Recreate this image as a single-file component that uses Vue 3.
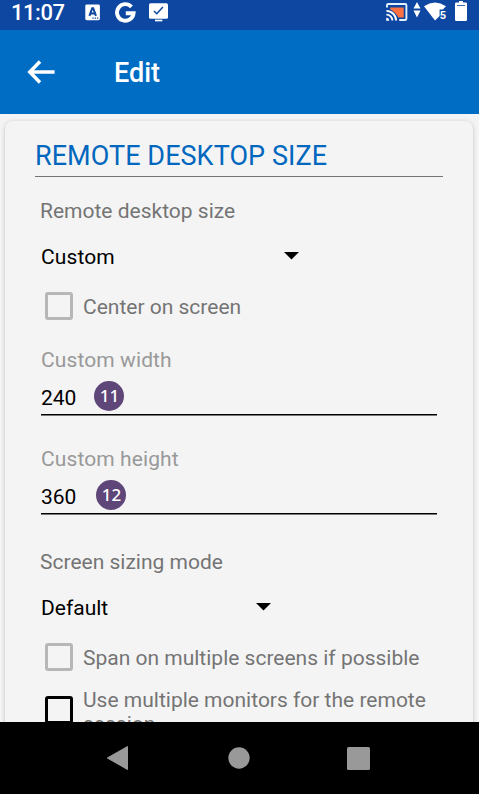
<script setup>
import { ref } from 'vue'

const title = ref('REMOTE DESKTOP SIZE')
const fields = [
  { label: 'Custom width', value: '240', badge: '11', id: 'width' },
  { label: 'Custom height', value: '360', badge: '12', id: 'height' },
]
</script>

<template>
  <div class="screen">
    <header class="status">
      <span class="time">11:07</span>
      <svg class="s-key" width="16" height="18" viewBox="0 0 16 18">
        <rect x="0.3" y="0.6" width="14.6" height="15.6" rx="1.4" fill="#fff" />
        <path d="M4.400 11.800 7.200 4.300h1l2.800 7.500M5.600 9.400h4.300" fill="none" stroke="#0d47a1" stroke-width="2" />
        <path d="M7.400 13.600h1.300v1.200H7.400zM9.700 13.600h1.300v1.200H9.700zM12 13.600h1.300v1.200H12z" fill="#0d47a1" />
      </svg>
      <svg class="s-g" width="22" height="22" viewBox="0 0 22 22">
        <path d="M16.500 4.900A8.300 8.300 0 1 0 18.600 11.200H10.800" fill="none" stroke="#fff" stroke-width="3.900" />
      </svg>
      <svg class="s-mon" width="20" height="20" viewBox="0 0 20 20">
        <rect x="0" y="1.200" width="19" height="15.600" rx="1.600" fill="#fff" />
        <path d="M6 18.500h7.400" stroke="#fff" stroke-width="1.700" />
        <path d="m5 9 2.800 2.700 6.100-6.600" fill="none" stroke="#0d47a1" stroke-width="1.500" />
      </svg>
      <svg class="s-cast" width="22" height="20" viewBox="0 0 22 20">
        <path d="M4.200 5.600h13.500v9.900h-5.400C10.800 12.200 8.500 9.800 4.200 7.200z" fill="#ff7043" />
        <path d="M1 5.600V3.200q0-1.200 1.200-1.200h17q1.200 0 1.200 1.200v13.600q0 1.200-1.200 1.200H13.200" fill="none" stroke="#e3f2fd" stroke-width="1.900" />
        <path d="M.4 8.900a9.700 9.700 0 0 1 9.700 9.700M.4 12.600a6 6 0 0 1 6 6" fill="none" stroke="#fff" stroke-width="1.900" />
        <path d="M.2 15.700a3 3 0 0 1 3 3h-3z" fill="#fff" />
      </svg>
      <svg class="s-arrows" width="8" height="18" viewBox="0 0 8 18">
        <path d="M4 0 7.500 6.500H.5zM.5 8.600h7L4 15.600z" fill="#fff" />
      </svg>
      <svg class="s-wifi" width="24" height="20" viewBox="0 0 24 20">
        <path d="M0 4.200Q11 -3 22 4.200L18.800 7.600H15.600V14L11 18.500z" fill="#fff" />
        <text x="15.800" y="16.600" fill="#fff" class="five">5</text>
      </svg>
      <svg class="s-bat" width="12" height="20" viewBox="0 0 12 20">
        <path d="M4 0h4v1.600h2.800q1.200 0 1.200 1.200v16q0 1.200-1.200 1.200H1.200Q0 20 0 18.800v-16Q0 1.600 1.200 1.600H4z" fill="#fff" />
        <path d="M2 4.500h8" stroke="#0d47a1" stroke-width="1" opacity=".8" />
      </svg>
    </header>

    <div class="toolbar">
      <svg width="28" height="24" viewBox="0 0 28 24">
        <path d="M13 1.600 2.800 12 13 22.400M2.800 12h24.800" fill="none" stroke="#fff" stroke-width="3.500" />
      </svg>
      <h1>Edit</h1>
    </div>

    <main>
      <section class="card">
        <h2><span>{{ title }}</span></h2>
        <div class="line label">Remote desktop size</div>
        <div class="line select first">
          <span class="wide">Custom</span>
          <svg width="15" height="8" viewBox="0 0 15 8"><path d="M0 0h15L7.500 7.500z" /></svg>
        </div>
        <div class="check center">
          <i class="box"></i><span>Center on screen</span>
        </div>
        <div v-for="f in fields" :key="f.id" class="field" :class="f.id">
          <div class="line hint wide">{{ f.label }}</div>
          <div class="value">
            <span>{{ f.value }}</span><b class="badge">{{ f.badge }}</b>
          </div>
        </div>
        <div class="line label mode">Screen sizing mode</div>
        <div class="line select second">
          <span>Default</span>
          <svg width="15" height="8" viewBox="0 0 15 8"><path d="M0 0h15L7.500 7.500z" /></svg>
        </div>
        <div class="check span">
          <i class="box"></i><span>Span on multiple screens if possible</span>
        </div>
        <div class="check multi">
          <i class="box dark"></i><span>Use multiple monitors for the remote<br />session</span>
        </div>
      </section>
    </main>

    <nav>
      <svg width="22" height="26" viewBox="0 0 22 26"><path d="M21.500 1.500v23L1.300 13z" fill="#999" stroke="#999" stroke-linejoin="round" /></svg>
      <svg width="22" height="22" viewBox="0 0 22 22"><circle cx="11" cy="11" r="10.700" fill="#999" /></svg>
      <svg width="23" height="23" viewBox="0 0 23 23"><rect width="23" height="23" rx="1.500" fill="#999" /></svg>
    </nav>
  </div>
</template>

<style>
body {
  margin: 0;
}
</style>

<style scoped>
.screen {
  width: 479px;
  height: 794px;
  display: flex;
  flex-direction: column;
  overflow: hidden;
  background: #f4f4f4;
  font-family: Roboto, sans-serif;
  font-size: 21px;
  color: #000;
}
svg {
  display: block;
  flex: none;
}
.status {
  height: 30px;
  flex: none;
  display: flex;
  align-items: flex-start;
  background: #0d47a1;
  color: #fff;
}
.time {
  width: 73px;
  padding-left: 11px;
  line-height: 25px;
  font-size: 22px;
  font-weight: 500;
  letter-spacing: -0.450px;
}
.s-key { margin: 4px 0 0 1px; }
.s-g { margin: 2px 0 0 14px; }
.s-mon { margin: 2px 0 0 12px; }
.s-cast { margin: 2px 0 0 216.500px; }
.s-arrows { margin: 2px 0 0 5px; }
.s-wifi { margin: 2px 0 0 3px; }
.s-bat { margin: 1px 0 0 7.500px; }
.five {
  font-size: 11px;
  font-weight: 700;
}
.toolbar {
  height: 84px;
  flex: none;
  display: flex;
  align-items: center;
  padding-left: 27px;
  background: #006dc5;
  color: #fff;
}
h1 {
  margin: 2px 0 0 59px;
  font-size: 27px;
  line-height: 32px;
  font-weight: 500;
}
main {
  flex: 1;
  min-height: 0;
  overflow: hidden;
  padding: 7px 6px 0 5px;
}
.card {
  box-sizing: border-box;
  height: 640px;
  padding: 18px 30px 0;
  border-radius: 8px;
  box-shadow: 0 1px 4px rgba(0, 0, 0, 0.22);
  background: #f4f4f4;
}
h2 {
  margin: 0;
  height: 37px;
  border-bottom: 1px solid #747474;
  color: #0067be;
  font-size: 27px;
  line-height: 34px;
  font-weight: 400;
  letter-spacing: 0.060px;
  white-space: nowrap;
}
.line {
  height: 24px;
  line-height: 24px;
  padding-left: 6px;
  white-space: nowrap;
}
.wide { letter-spacing: 0.100px; }
.label {
  margin-top: 22px;
  padding-left: 5px;
  color: #747474;
}
.select {
  margin-top: 22px;
  display: flex;
  align-items: center;
  justify-content: space-between;
}
.first { width: 257.500px; }
.second { width: 229.500px; }
.select svg { margin-top: -2px; }
.check {
  display: flex;
  padding-left: 10px;
  line-height: 24px;
  color: #747474;
  white-space: nowrap;
}
.box {
  box-sizing: border-box;
  width: 28px;
  height: 28px;
  flex: none;
  margin: -3px 10px 0 0;
  border: 3px solid #b7b7b7;
  border-radius: 3px;
}
.dark {
  margin-top: 8px;
  border-color: #000;
}
.center { height: 24px; margin-top: 26px; }
.field { margin-top: 29px; }
.hint { color: #999; }
.value {
  display: flex;
  height: 28px;
  margin: 14px 6px 0;
  border-bottom: 1px solid #000;
  box-shadow: 0 1px 0 #777;
  line-height: 24px;
}
.height { margin-top: 32px; }
.badge {
  width: 30px;
  height: 30px;
  margin: -5.500px 0 0 18px;
  border-radius: 50%;
  background: #5e4678;
  color: #fff;
  font: 500 17px/29px "Noto Sans", sans-serif;
  text-align: center;
}
.height .badge { margin-left: 20px; }
.mode { margin-top: 36px; }
.span { height: 24px; margin-top: 26px; }
.multi { margin-top: 18px; }
nav {
  height: 72px;
  flex: none;
  display: flex;
  align-items: center;
  gap: 98.500px;
  padding-left: 106px;
  background: #000;
}
nav svg:nth-child(2) { margin-left: 1px; }
nav svg:last-child { margin-left: -1px; }
</style>
